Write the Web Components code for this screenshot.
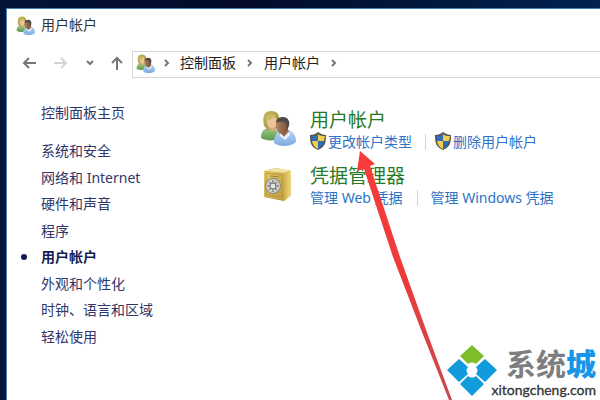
<!DOCTYPE html>
<html lang="zh-CN">
<head>
<meta charset="utf-8">
<title>用户帐户</title>
<style>
	html {
		height: 100%;
	}
	body {
		margin: 0;
		min-height: 100%;
		display: flex;
		overflow: hidden;
		box-sizing: border-box;
		padding: 8px 0 0 6px;
		background: linear-gradient(90deg, #02133a, #020b2a 40%, #01224f);
		font: 14px/20px "Noto Sans", "Noto Sans CJK SC", sans-serif;
	}
</style>
</head>
<body>
<control-window>
	<title-bar slot="title">用户帐户</title-bar>
	<nav-bar slot="nav">
		<crumb-item>控制面板</crumb-item>
		<crumb-item>用户帐户</crumb-item>
	</nav-bar>
	<side-nav slot="side">
		<side-link slot="home">控制面板主页</side-link>
		<side-link>系统和安全</side-link>
		<side-link>网络和 Internet</side-link>
		<side-link>硬件和声音</side-link>
		<side-link>程序</side-link>
		<side-link current>用户帐户</side-link>
		<side-link>外观和个性化</side-link>
		<side-link>时钟、语言和区域</side-link>
		<side-link>轻松使用</side-link>
	</side-nav>
	<panel-category heading="用户帐户">
		<users-icon slot="icon"></users-icon>
		<task-link shield>更改帐户类型</task-link>
		<task-link shield>删除用户帐户</task-link>
	</panel-category>
	<panel-category heading="凭据管理器">
		<safe-icon slot="icon"></safe-icon>
		<task-link>管理 Web 凭据</task-link>
		<task-link>管理 Windows 凭据</task-link>
	</panel-category>
</control-window>
<pointer-arrow></pointer-arrow>
<site-mark></site-mark>

<script>
const define = (name, html, setup) => {
	customElements.define(name, class extends HTMLElement {
		connectedCallback() {
			if (this.shadowRoot) return;
			this.attachShadow({ mode: 'open' });
			this.shadowRoot.innerHTML = html;
			if (setup) setup(this, this.shadowRoot);
		}
	});
};

define('users-icon', `
	<style>
		:host { display: block; width: 36px; height: 36px; }
		svg { display: block; width: 100%; height: 100%; }
	</style>
	<svg viewBox="0 0 36 36" aria-hidden="true">
		<defs>
			<linearGradient id="green" x2="0" y2="1"><stop stop-color="#9cc980"/><stop offset="1" stop-color="#5d9a52"/></linearGradient>
			<linearGradient id="blue" x2="0" y2="1"><stop stop-color="#b9d7f4"/><stop offset="1" stop-color="#7cabe0"/></linearGradient>
			<linearGradient id="hair" x2="1" y2="1"><stop stop-color="#c3b95a"/><stop offset="1" stop-color="#9d8b42"/></linearGradient>
			<linearGradient id="skin" x2="1"><stop stop-color="#b08263"/><stop offset="1" stop-color="#7a503a"/></linearGradient>
		</defs>
		<path d="M1 28c0-6 2-9 7-10l8 1 4 10c-6 2-15 2-19-1z" fill="url(#green)"/>
		<path d="M4 16C2 7 4 1 11 1s9 4 8 12l-3 6-8 1z" fill="url(#hair)"/>
		<path d="M8 18l5 4 3-4-2-3H9z" fill="#d7ad7c"/>
		<ellipse cx="12" cy="12" rx="5" ry="6" fill="#ecc69a"/>
		<path d="M6 11c-1-5 3-8 10-6-2 3-5 5-10 6z" fill="#c8bd61"/>
		<path d="M14 33c0-7 2-11 8-12l6-1c5 1 8 5 8 12-5 5-17 5-22 1z" fill="url(#blue)"/>
		<path d="M20 22l4 5 5-6-2-3h-6z" fill="#9a6848"/>
		<path d="M20 23l4 4 5-5 1 3-5 5-5-4z" fill="#e6f1fb"/>
		<ellipse cx="22" cy="16" rx="6" ry="8" fill="url(#skin)"/>
		<path d="M16 13c0-4 3-6 7-6 5 0 7 4 6 9l-2 4-1-7c-3-1-7-2-10 0z" fill="#504a49"/>
	</svg>
`);

define('safe-icon', `
	<style>
		:host { display: block; width: 36px; height: 36px; }
		svg { display: block; width: 100%; height: 100%; }
	</style>
	<svg viewBox="0 0 36 36" aria-hidden="true">
		<defs>
			<linearGradient id="front" x2="1" y2="1"><stop stop-color="#e6cd6d"/><stop offset="1" stop-color="#c09c3b"/></linearGradient>
			<linearGradient id="side" x2="1"><stop stop-color="#cfae48"/><stop offset="1" stop-color="#edda83"/></linearGradient>
		</defs>
		<path d="M4 5l12-3 15 3v24l-7 6-20-4z" fill="#b5923d"/>
		<path d="M4 5l12-3 15 3-7 2z" fill="#f1e3a0"/>
		<path d="M24 7l7-2v24l-7 6z" fill="url(#side)"/>
		<path d="M4 5l20 2v27L4 31z" fill="url(#front)"/>
		<path d="M6 7l16 2v22L6 29z" fill="none" stroke="#b6963f"/>
		<path d="M10 10l9 1" stroke="#9c7e34"/>
		<circle cx="13" cy="20" r="8" fill="#8b887c"/>
		<circle cx="13" cy="20" r="7" fill="#cfcfca"/>
		<path d="M13 14v12M7 20h12M9 16l8 8M17 16l-8 8" stroke="#8b8c86" stroke-width="1.500"/>
		<circle cx="13" cy="20" r="3" fill="#e3e3e0" stroke="#6f706d"/>
	</svg>
`);

define('control-window', `
	<style>
		:host {
			flex: 1;
			display: flex;
			flex-direction: column;
			min-width: 0;
			background: #fff;
			border: solid #3e85b5;
			border-width: 1px 0 0 1px;
		}
		.body {
			display: grid;
			grid-template-columns: 253px 1fr;
			padding-top: 25px;
		}
		main {
			display: flex;
			flex-direction: column;
			gap: 14px;
			padding-top: 7px;
		}
	</style>
	<slot name="title"></slot>
	<slot name="nav"></slot>
	<div class="body">
		<slot name="side"></slot>
		<main><slot></slot></main>
	</div>
`);

define('title-bar', `
	<style>
		:host {
			display: flex;
			align-items: center;
			gap: 6px;
			height: 32px;
			padding-left: 9px;
			color: #333;
		}
		users-icon { width: 19px; height: 19px; }
	</style>
	<users-icon></users-icon>
	<span><slot></slot></span>
`);

define('nav-bar', `
	<style>
		:host {
			display: flex;
			align-items: center;
			padding: 10px 0 0 14px;
		}
		.history {
			display: flex;
			width: 111px;
			align-items: center;
			justify-content: space-between;
			box-sizing: border-box;
			padding: 0 8px 3px 0;
		}
		button {
			display: block;
			padding: 0;
			border: 0;
			background: none;
			color: #777;
		}
		button:disabled { color: #d5d5d5; }
		svg {
			display: block;
			fill: none;
			stroke: currentColor;
			stroke-width: 2;
		}
		nav {
			flex: 1;
			display: flex;
			align-items: center;
			height: 22px;
			padding: 0 0 3px 3px;
			border: 1px solid #d5d5d5;
			border-right: 0;
			color: #777;
		}
		users-icon { width: 19px; height: 19px; }
		.sep { margin: 0 10px 0 7px; }
	</style>
	<div class="history">
		<button aria-label="后退"><svg width="16" height="14"><path d="M15 7H3M8 2L3 7l5 5"/></svg></button>
		<button aria-label="前进" disabled><svg width="16" height="14"><path d="M1 7h12M8 2l5 5-5 5"/></svg></button>
		<button aria-label="最近位置"><svg width="8" height="6"><path d="M1 1l3 3 3-3"/></svg></button>
		<button aria-label="向上"><svg width="14" height="16"><path d="M7 15V3M2 8l5-5 5 5"/></svg></button>
	</div>
	<nav aria-label="地址">
		<users-icon></users-icon>
		<svg class="sep" width="8" height="8"><path d="M3 1l3 3-3 3"/></svg>
		<slot></slot>
	</nav>
`);

define('crumb-item', `
	<style>
		:host { display: flex; align-items: center; }
		a { color: #222; text-decoration: none; }
		svg {
			margin: 0 10px;
			fill: none;
			stroke: #777;
			stroke-width: 2;
		}
	</style>
	<a href="#"><slot></slot></a>
	<svg width="8" height="8" aria-hidden="true"><path d="M2 1l3 3-3 3"/></svg>
`);

define('side-nav', `
	<style>
		:host { display: block; }
		nav {
			display: flex;
			flex-direction: column;
			justify-content: space-between;
			min-height: 206px;
			margin-top: 18px;
		}
	</style>
	<slot name="home"></slot>
	<nav><slot></slot></nav>
`);

define('side-link', `
	<style>
		:host { display: flex; align-items: center; padding-left: 14px; }
		:host::before {
			content: "";
			width: 6px;
			height: 6px;
			margin-right: 14px;
			border-radius: 50%;
		}
		:host([current]) { font-weight: bold; }
		:host([current])::before { background: #151c55; }
		a { color: #30356a; text-decoration: none; }
		:host([current]) a { color: #151c55; }
	</style>
	<a href="#"><slot></slot></a>
`);

define('panel-category', `
	<style>
		:host { display: flex; gap: 14px; }
		h2 {
			margin: 0 0 2px;
			font-size: 19px;
			font-weight: normal;
			line-height: 20px;
			color: #267a26;
		}
		.tasks { display: flex; }
	</style>
	<slot name="icon"></slot>
	<section>
		<h2></h2>
		<div class="tasks"><slot></slot></div>
	</section>
`, (el, root) => {
	root.querySelector('h2').textContent = el.getAttribute('heading');
});

define('task-link', `
	<style>
		:host { display: flex; align-items: center; }
		:host(:not(:last-child))::after {
			content: "";
			width: 1px;
			height: 16px;
			margin: 0 13px 0 14px;
			background: #d3d3d3;
		}
		:host([shield]:not(:last-child))::after { margin: 0 9px 0 13px; }
		a {
			display: flex;
			align-items: center;
			color: #2e72c6;
			text-decoration: none;
		}
		svg { display: none; }
		:host([shield]) svg { display: block; }
	</style>
	<a href="#">
		<svg width="18" height="20" viewBox="0 0 18 20" aria-hidden="true">
			<path d="M8 0c3 2 5 3 8 3 0 8-1 12-8 15C1 15 0 11 0 3c3 0 6-1 8-3z" fill="#55554b"/>
			<path d="M8 2v7H2L1 4c3 0 5 0 7-2z" fill="#2d6fb1"/>
			<path d="M8 2c2 2 4 2 7 2l-1 5H8z" fill="#f2cc4d"/>
			<path d="M2 9h6v8c-4-2-5-4-6-8z" fill="#f2cc4d"/>
			<path d="M8 9h6c-1 4-2 6-6 8z" fill="#2d6fb1"/>
		</svg>
		<span><slot></slot></span>
	</a>
`);

// red pointer laid over the window, aimed at the first task
define('pointer-arrow', `
	<style>
		:host { position: absolute; left: 356px; top: 150px; pointer-events: none; }
		svg { display: block; }
	</style>
	<svg width="98" height="250" viewBox="0 0 98 250" aria-hidden="true">
		<defs><linearGradient id="red" x2="0" y2="1"><stop stop-color="#fa3b3b"/><stop offset=".5" stop-color="#ec3b3b"/><stop offset="1" stop-color="#c94950"/></linearGradient></defs>
		<path d="M4 1l15 13-5 2 30 91 25 70 27 73h-3L64 177 37 107 8 19l-7 2z" fill="url(#red)"/>
	</svg>
`);

define('site-mark', `
	<style>
		:host {
			position: absolute;
			right: 4px;
			bottom: 0;
			display: flex;
			align-items: flex-end;
			font-family: Lato, "Noto Sans CJK SC", sans-serif;
		}
		svg { display: block; margin-right: -7px; }
		.text { padding-bottom: 2px; text-align: right; }
		.name {
			font-size: 30px;
			font-weight: bold;
			line-height: 36px;
			color: #7c7e80;
		}
		b { color: #1596e8; }
		.url {
			font-size: 14px;
			line-height: 17px;
			color: #333;
			-webkit-text-stroke: 0.3px #333;
		}
	</style>
	<svg width="52" height="60" viewBox="0 0 52 60" aria-hidden="true">
		<path d="M26 5l12 11-8 8c-2-2-6-2-8 0l-8-8z" fill="#7fbd2b"/>
		<path d="M13 19l9 8c-2 2-2 5 0 7l-9 8L1 30z" fill="#129bdb"/>
		<path d="M39 19l12 11-12 12-9-8c2-2 2-5 0-7z" fill="#129bdb"/>
		<path d="M22 36c2 2 6 2 8 0l8 8-12 12-12-12z" fill="#129bdb"/>
	</svg>
	<div class="text">
		<div class="name">系统<b>城</b></div>
		<div class="url">xitongcheng.com</div>
	</div>
`);
</script>
</body>
</html>
